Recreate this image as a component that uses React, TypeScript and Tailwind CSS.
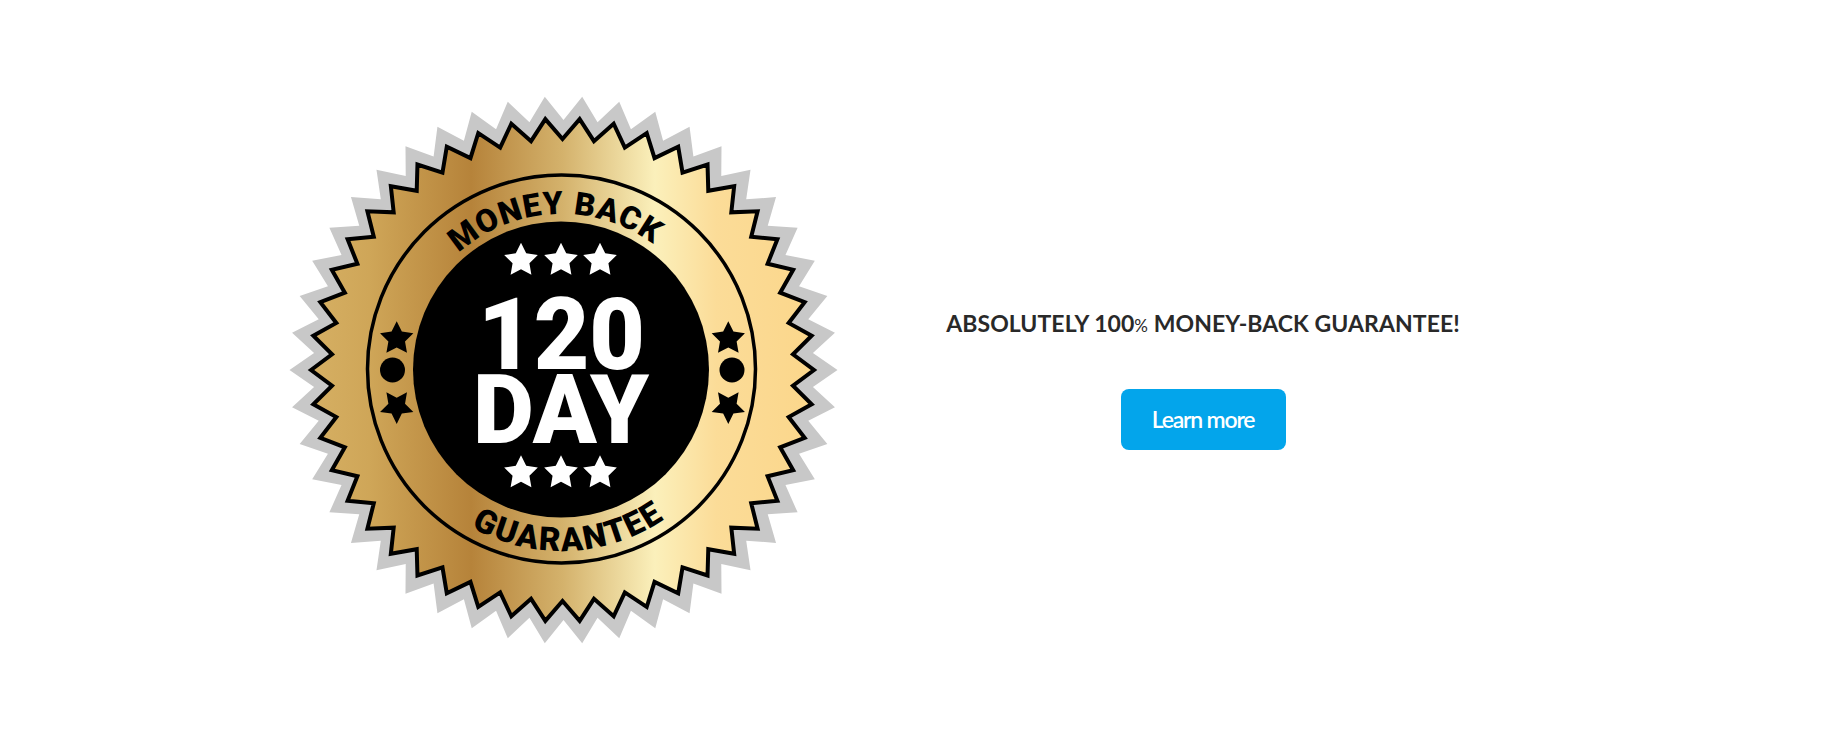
import React from 'react';

const CX = 563;
const CY = 370;

// 46-tooth burst, teeth start half a step off the horizontal so one tip sits at 9 o'clock
const burst = (cx: number, cy: number, rOut: number, rIn: number) => {
  const pts: string[] = [];
  const step = (Math.PI * 2) / 46;
  for (let i = 0; i < 46; i++) {
    const a = Math.PI + i * step;
    const b = a + step / 2;
    pts.push(`${(cx + rOut * Math.cos(a)).toFixed(2)},${(cy + rOut * Math.sin(a)).toFixed(2)}`);
    pts.push(`${(cx + rIn * Math.cos(b)).toFixed(2)},${(cy + rIn * Math.sin(b)).toFixed(2)}`);
  }
  return pts.join(' ');
};

const star = (cx: number, cy: number, r: number, flip = false) => {
  const pts: string[] = [];
  for (let i = 0; i < 10; i++) {
    const rad = i % 2 === 0 ? r : r * 0.5;
    const a = -Math.PI / 2 + (i * Math.PI) / 5 + (flip ? Math.PI : 0);
    pts.push(`${(cx + rad * Math.cos(a)).toFixed(2)},${(cy + rad * Math.sin(a)).toFixed(2)}`);
  }
  return pts.join(' ');
};

const whiteStars = [
  [521, 260.5],
  [561, 260.5],
  [600, 260.5],
  [521, 473],
  [561, 473],
  [600, 473],
];

const Badge: React.FC = () => (
  <svg viewBox="283 90 560 560" className="block h-[560px] w-[560px] shrink-0">
    <defs>
      <linearGradient id="gold" gradientUnits="userSpaceOnUse" x1="308" y1="0" x2="818" y2="0">
        <stop offset="0" stopColor="#d6b064" />
        <stop offset="0.12" stopColor="#cfa658" />
        <stop offset="0.32" stopColor="#b6833a" />
        <stop offset="0.5" stopColor="#d4b26c" />
        <stop offset="0.68" stopColor="#fbf0bb" />
        <stop offset="0.8" stopColor="#fbdc98" />
        <stop offset="1" stopColor="#fbd68a" />
      </linearGradient>
      <path id="topArc" d="M 406.5 369 A 155 155 0 0 1 716.5 369" />
      <path id="bottomArc" d="M 379.5 369 A 182 182 0 0 0 743.5 369" />
    </defs>

    <polygon points={burst(CX + 0.5, CY, 274, 250)} fill="#c8c8c8" />
    <polygon points={burst(CX - 0.5, CY, 251.5, 231)} fill="url(#gold)" stroke="#000" strokeWidth="4" strokeMiterlimit="8" />

    <circle cx="561.5" cy="369" r="194" fill="none" stroke="#000" strokeWidth="3.5" />
    <circle cx="561" cy="369.5" r="148" fill="#000" />

    <g transform="rotate(-2.5 561.5 369)">
      <text className="font-['Roboto',sans-serif] font-black" fontSize="32" letterSpacing="0.9" textAnchor="middle" fill="#000">
        <textPath href="#topArc" startOffset="50%">MONEY BACK</textPath>
      </text>
    </g>
    <g transform="rotate(-2.5 561.5 369)">
      <text className="font-['Roboto',sans-serif] font-black" fontSize="33" letterSpacing="1.6" textAnchor="middle" fill="#000">
        <textPath href="#bottomArc" startOffset="50%">GUARANTEE</textPath>
      </text>
    </g>

    {whiteStars.map(([x, y], i) => (
      <polygon key={i} points={star(x, y, 17.7)} fill="#fff" />
    ))}
    <polygon points={star(396.7, 338.7, 17.5)} fill="#000" />
    <polygon points={star(396.7, 406.5, 17.5, true)} fill="#000" />
    <circle cx="392.5" cy="370" r="12.5" fill="#000" />
    <polygon points={star(728.3, 338.7, 17.5)} fill="#000" />
    <polygon points={star(728.3, 406.5, 17.5, true)} fill="#000" />
    <circle cx="732" cy="370" r="12.5" fill="#000" />

    <text
      x="561.5"
      y="369"
      className="font-['Roboto',sans-serif] font-black"
      fontSize="101"
      textAnchor="middle"
      fill="#fff"
      textLength="167"
      lengthAdjust="spacingAndGlyphs"
    >
      120
    </text>
    <text
      x="561"
      y="443"
      className="font-['Roboto',sans-serif] font-black"
      fontSize="96"
      textAnchor="middle"
      fill="#fff"
      textLength="176"
      lengthAdjust="spacingAndGlyphs"
    >
      DAY
    </text>
  </svg>
);

const App: React.FC = () => {
  return (
    <div className="flex h-[739px] w-full items-start overflow-hidden bg-white pt-[90px] pl-[283px]">
      <Badge />
      <div className="flex w-[720px] flex-col items-center pt-[217px]">
        <h2 className="font-['Lato',sans-serif] text-[23px] leading-8 font-bold tracking-[0.06px] whitespace-nowrap text-[#292929]">
          ABSOLUTELY 100<span className="text-[17px] font-normal">%</span> MONEY-BACK GUARANTEE!
        </h2>
        <a className="mt-[47px] flex h-[61px] w-[165px] items-center justify-center rounded-lg bg-[#03a5eb] font-['Lato',sans-serif] text-[23px] font-semibold tracking-[-1.2px] text-white">
          Learn more
        </a>
      </div>
    </div>
  );
};

export default App;
